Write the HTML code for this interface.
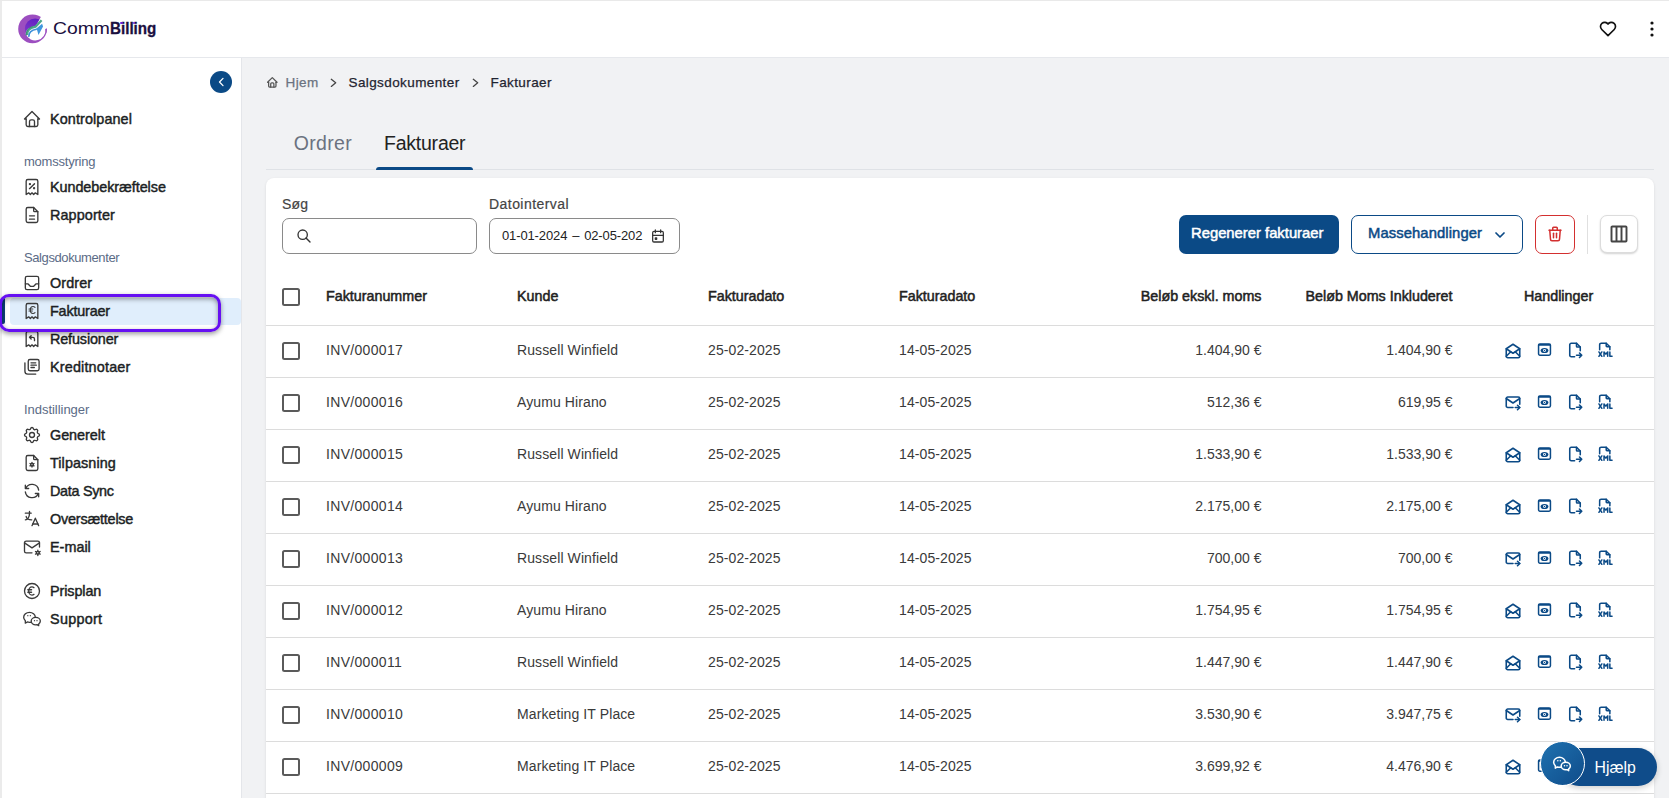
<!DOCTYPE html>
<html lang="da">
<head>
<meta charset="utf-8">
<title>CommBilling - Fakturaer</title>
<style>
*{box-sizing:border-box;margin:0;padding:0}
html,body{width:1669px;height:798px;overflow:hidden;background:#fff}
body{font-family:"Liberation Sans",sans-serif;color:#1f2328;position:relative}
svg{display:block}
.ic{fill:none;stroke:currentColor;stroke-width:1.75;stroke-linecap:round;stroke-linejoin:round}
#frameL{position:absolute;left:0;top:0;width:2px;height:798px;background:#ebebeb;z-index:50}
#frameT{position:absolute;left:0;top:0;width:1669px;height:1px;background:#e9e9e9;z-index:50}
/* header */
#hdr{position:absolute;left:2px;top:1px;width:1667px;height:57px;background:#fff;border-bottom:1px solid #e6e8ec}
#logo{position:absolute;left:10px;top:7.200px}
#brand{position:absolute;left:0;top:17px;font-size:16.600px;line-height:22px;color:#1a0f40;white-space:nowrap}
#brand span{position:absolute;top:0;display:block;transform-origin:0 50%}
#br1{left:50.900px;transform:scaleX(1.165)}
#br2{left:107.500px;font-weight:700;transform:scaleX(.915);-webkit-text-stroke:.3px #1a0f40}
.pd{position:absolute;top:20.700px;width:2.800px;height:2.800px;border-radius:50%;background:#6a1fd6}
#heart{position:absolute;left:1596px;top:18px;color:#111}
#dots{position:absolute;left:1640px;top:17px;color:#111}
/* sidebar */
#side{position:absolute;left:2px;top:58px;width:240px;height:740px;background:#fff;border-right:1px solid #e4e6ea}
#collapse{position:absolute;left:208px;top:13px;width:22px;height:22px;border-radius:50%;background:#0b4a86;color:#fff}
.nav{position:absolute;left:0;width:239px;height:28px;font-weight:400;-webkit-text-stroke:.45px #1c1f24;font-size:14.400px;line-height:28px;color:#1c1f24;white-space:nowrap}
.nav svg{position:absolute;left:20px;top:4px;color:#3a3a3a;stroke-width:1.600}
.nav span{position:absolute;left:48px;top:0}
.sec{position:absolute;left:22px;font-size:13px;line-height:16px;color:#5b6b86;white-space:nowrap}
#actbg{position:absolute;left:8px;top:239.500px;width:231px;height:27.500px;background:#e0eefc;border-radius:4px}
#actbar{position:absolute;left:0;top:239px;width:3px;height:27px;background:#0b4077;border-radius:0 2px 2px 0}
#hl{position:absolute;left:-1px;top:294px;width:221.500px;height:38px;border:3px solid #6610f2;border-radius:10px;box-shadow:0 2px 5px rgba(0,0,0,.4), inset 0 2px 5px rgba(0,0,0,.4);z-index:60}
/* main */
#main{position:absolute;left:242px;top:58px;width:1427px;height:740px;background:#f1f2f4}
#content{position:absolute;left:0;top:0;width:1669px;height:798px;overflow:hidden}
.bc{position:absolute;top:73px;font-size:13.500px;line-height:20px;color:#1f2430;white-space:nowrap;letter-spacing:.4px;-webkit-text-stroke:.25px currentColor}
.tab{position:absolute;top:128px;font-size:19.500px;line-height:31px;white-space:nowrap}
#tabline{position:absolute;left:266px;top:169px;width:1388px;height:1px;background:#dfe2e6}
#tabul{position:absolute;left:376px;top:167px;width:97px;height:3px;background:#0b4a86;border-radius:3px 3px 0 0}
#card{position:absolute;left:266px;top:178px;width:1388px;height:640px;background:#fff;border-radius:8px;box-shadow:0 1px 3px rgba(0,0,0,.1)}
.lbl{position:absolute;top:194px;font-size:14px;line-height:20px;color:#444;white-space:nowrap;letter-spacing:.12px;-webkit-text-stroke:.2px #444}
.inp{position:absolute;top:218px;height:36px;border:1px solid #8a8a8a;border-radius:7px;background:#fff}
#b1{position:absolute;left:1179px;top:215px;width:160px;height:39px;border-radius:7px;background:#0b4a86;color:#fff;font-weight:400;-webkit-text-stroke:.5px #fff;font-size:14.800px;letter-spacing:0;line-height:36px;text-align:left;padding-left:12px;white-space:nowrap}
#b2{position:absolute;left:1351px;top:215px;width:172px;height:39px;border-radius:7px;border:1px solid #0b4a86;color:#0b4a86;font-weight:400;-webkit-text-stroke:.5px #0b4a86;font-size:14.800px;letter-spacing:.09px;line-height:34px;white-space:nowrap;background:#fff}
#b2 span{position:absolute;left:16px;top:0}
#b3{position:absolute;left:1535px;top:215px;width:40px;height:39px;border-radius:7px;border:1px solid #d32f2f;color:#d32f2f;background:#fff}
#vsep{position:absolute;left:1587px;top:215px;width:1px;height:39px;background:#e0e0e0}
#b4{position:absolute;left:1600px;top:215px;width:38px;height:38px;border-radius:7px;border:1px solid #dcdcdc;color:#444;background:#fff;box-shadow:0 1px 2px rgba(0,0,0,.18)}
.row{position:absolute;left:266px;width:1388px;height:52px;border-bottom:1px solid #dcdcdc;font-size:14px;line-height:49px;color:#3a3a3a;white-space:nowrap;letter-spacing:.1px}
.row.hd{font-weight:400;-webkit-text-stroke:.5px #222;color:#222;line-height:56px;font-size:14.300px;letter-spacing:0}.hd span{transform:scaleX(1);transform-origin:0 50%}.hd .c5,.hd .c6{transform-origin:100% 50%}
.row span{position:absolute;top:0}
.cb{position:absolute;left:16px;top:16px;width:18px;height:18px;border:2px solid #5a5a5a;border-radius:2.500px}
.hd .cb{top:20px}
.c1{left:60px;letter-spacing:.32px}.hd .c1{letter-spacing:0}.c2{left:251px}.c3{left:442px}.c4{left:633px}
.c5{right:392.500px;letter-spacing:0}.c6{right:201.500px;letter-spacing:0}.c7{left:1258px}
.row svg{position:absolute;color:#0b4a86}
.a1{left:1238px;top:16px;width:18px;height:18px}
.a2{left:1271px;top:16px;width:15px;height:15px}
.a3{left:1300px;top:15px;width:18px;height:18px}
.a4{left:1329.500px;top:15px;width:17.500px;height:17.500px}
#helppill{position:absolute;left:1560px;top:747.700px;width:96.700px;height:38px;border-radius:19px;background:#0f4c8a;color:#fff;font-size:15.800px;line-height:39px;padding-left:34.500px;box-shadow:0 2px 6px rgba(0,0,0,.2)}
#helpc{position:absolute;left:1540.400px;top:740.600px;width:45px;height:45px;border-radius:50%;border:1.600px solid #fff;background:linear-gradient(135deg,#1f72b0,#0f4c8a);color:#fff}
</style>
</head>
<body>
<div id="frameL"></div><div id="frameT"></div>
<div id="hdr">
  <svg id="logo" width="48" height="42" viewBox="0 0 48 42">
    <defs><linearGradient id="lg" x1="0.6" y1="0" x2="0.3" y2="1"><stop offset="0" stop-color="#5f1fc4"/><stop offset="1" stop-color="#8a3fc8"/></linearGradient></defs>
    <circle cx="20.53" cy="20.89" r="14.32" fill="#9c4ec0"/>
    <circle cx="23.16" cy="20.79" r="10.32" fill="url(#lg)"/>
    <path d="M13.79 26.32 C13.42 22.11 17.37 18.53 23.68 18.16 L28.84 8.95 L38.95 3.16 L38.95 20.26 L35.05 20.63 L33.47 21.05 A10.32 10.32 0 0 1 13.79 26.32z" fill="#fff"/>
    <path d="M34.84 20.26 A14.32 14.32 0 0 1 29.47 32.21 A10.32 10.32 0 0 0 33.47 21.05z" fill="#9c4ec0"/>
    <path d="M14.89 27.11 C14.74 22.63 18.16 19.47 23.79 18.53 L29.58 12.21" fill="none" stroke="#4ea78a" stroke-width="2.32" stroke-linejoin="miter"/>
    <path d="M14.32 27.37 C14.00 23.16 16.32 19.74 21.05 18.53" fill="none" stroke="#2f7f6b" stroke-width="0.63"/>
    <path d="M16.84 28.84 C16.63 24.74 19.74 21.84 24.63 21.16" fill="none" stroke="#3c8fd8" stroke-width="1.58"/>
    <path d="M23.79 20.95 L30.11 15.79 L31.05 18.42 L26.47 27.11 L25.16 22.37z" fill="#3f97de"/>
  </svg>
  <div id="brand"><span id="br1">Comm</span><span id="br2">Billing</span></div>
  <i class="pd" style="left:117.900px"></i><i class="pd" style="left:130.700px"></i>
  <svg id="heart" class="ic" width="20" height="20" viewBox="0 0 24 24" style="stroke-width:2"><path d="M19.5 12.572l-7.5 7.428l-7.5 -7.428a5 5 0 1 1 7.5 -6.566a5 5 0 1 1 7.5 6.572"/></svg>
  <svg id="dots" width="20" height="22" viewBox="0 0 20 22"><circle cx="10" cy="5" r="1.6" fill="#111"/><circle cx="10" cy="11" r="1.6" fill="#111"/><circle cx="10" cy="17" r="1.6" fill="#111"/></svg>
</div>

<div id="side">
  <div id="collapse"><svg class="ic" width="22" height="22" viewBox="0 0 22 22" style="stroke-width:1.300"><path d="M13 7.400L9.500 11L13 14.600"/></svg></div>
  <div id="actbg"></div><div id="actbar"></div>

  <div class="nav" style="top:47px"><svg class="ic" width="20" height="20" viewBox="0 0 24 24"><path d="M5 12l-2 0l9 -9l9 9l-2 0"/><path d="M5 12v7a2 2 0 0 0 2 2h10a2 2 0 0 0 2 -2v-7"/><path d="M9 21v-6a2 2 0 0 1 2 -2h2a2 2 0 0 1 2 2v6"/></svg><span style="letter-spacing:0.1px">Kontrolpanel</span></div>

  <div class="sec" style="top:96px;letter-spacing:-0.22px">momsstyring</div>
  <div class="nav" style="top:115px"><svg class="ic" width="20" height="20" viewBox="0 0 24 24"><path d="M9 14l6 -6"/><circle cx="9.5" cy="8.5" r=".6" fill="currentColor"/><circle cx="14.5" cy="13.5" r=".6" fill="currentColor"/><path d="M5 21v-16a2 2 0 0 1 2 -2h10a2 2 0 0 1 2 2v16l-3 -2l-2 2l-2 -2l-2 2l-2 -2l-3 2"/></svg><span style="letter-spacing:-0.06px">Kundebekræftelse</span></div>
  <div class="nav" style="top:143px"><svg class="ic" width="20" height="20" viewBox="0 0 24 24"><path d="M14 3v4a1 1 0 0 0 1 1h4"/><path d="M17 21h-10a2 2 0 0 1 -2 -2v-14a2 2 0 0 1 2 -2h7l5 5v11a2 2 0 0 1 -2 2z"/><path d="M9 13l6 0"/><path d="M9 17l6 0"/></svg><span style="letter-spacing:0.1px">Rapporter</span></div>

  <div class="sec" style="top:192px;letter-spacing:-0.4px">Salgsdokumenter</div>
  <div class="nav" style="top:211px"><svg class="ic" width="20" height="20" viewBox="0 0 24 24"><path d="M4 6a2 2 0 0 1 2 -2h12a2 2 0 0 1 2 2v12a2 2 0 0 1 -2 2h-12a2 2 0 0 1 -2 -2z"/><path d="M4 13h3l3 3h4l3 -3h3"/></svg><span style="letter-spacing:0.09px">Ordrer</span></div>
  <div class="nav" style="top:239px"><svg class="ic" width="20" height="20" viewBox="0 0 24 24"><path d="M5 21v-16a2 2 0 0 1 2 -2h10a2 2 0 0 1 2 2v16l-3 -2l-2 2l-2 -2l-2 2l-2 -2l-3 2"/><g style="stroke-width:1.350"><path d="M15.600 7.600a3.500 3.500 0 0 0 -2.400 -1c-1.900 0 -3.200 1.900 -3.200 4.200s1.300 4.200 3.200 4.200a3.500 3.500 0 0 0 2.400 -1"/><path d="M8.400 9.600h4.600"/><path d="M8.400 12h4"/></g></svg><span style="letter-spacing:-0.19px">Fakturaer</span></div>
  <div class="nav" style="top:267px"><svg class="ic" width="20" height="20" viewBox="0 0 24 24"><path d="M5 21v-16a2 2 0 0 1 2 -2h10a2 2 0 0 1 2 2v16l-3 -2l-2 2l-2 -2l-2 2l-2 -2l-3 2"/><path d="M15 14v-2a2 2 0 0 0 -2 -2h-4l2 -2m0 4l-2 -2"/></svg><span style="letter-spacing:-0.14px">Refusioner</span></div>
  <div class="nav" style="top:295px"><svg class="ic" width="20" height="20" viewBox="0 0 24 24"><path d="M7.500 5a2 2 0 0 1 2 -2h9a2 2 0 0 1 2 2v9.500a2 2 0 0 1 -2 2h-9a2 2 0 0 1 -2 -2z"/><path d="M16.500 20.500h-9.500a3.500 3.500 0 0 1 -3.500 -3.500v-10"/><path d="M10.800 7h5.700"/><path d="M10.800 9.800h6.400"/><path d="M10.800 12.600h4"/></svg><span style="letter-spacing:0.17px">Kreditnotaer</span></div>

  <div class="sec" style="top:344px;letter-spacing:-0.04px">Indstillinger</div>
  <div class="nav" style="top:363px"><svg class="ic" width="20" height="20" viewBox="0 0 24 24"><path d="M10.325 4.317c.426 -1.756 2.924 -1.756 3.35 0a1.724 1.724 0 0 0 2.573 1.066c1.543 -.94 3.31 .826 2.37 2.37a1.724 1.724 0 0 0 1.065 2.572c1.756 .426 1.756 2.924 0 3.35a1.724 1.724 0 0 0 -1.066 2.573c.94 1.543 -.826 3.31 -2.37 2.37a1.724 1.724 0 0 0 -2.572 1.065c-.426 1.756 -2.924 1.756 -3.35 0a1.724 1.724 0 0 0 -2.573 -1.066c-1.543 .94 -3.31 -.826 -2.37 -2.37a1.724 1.724 0 0 0 -1.065 -2.572c-1.756 -.426 -1.756 -2.924 0 -3.35a1.724 1.724 0 0 0 1.066 -2.573c-.94 -1.543 .826 -3.31 2.37 -2.37c1 .608 2.296 .07 2.572 -1.065z"/><path d="M9 12a3 3 0 1 0 6 0a3 3 0 0 0 -6 0"/></svg><span style="letter-spacing:-0.04px">Generelt</span></div>
  <div class="nav" style="top:391px"><svg class="ic" width="20" height="20" viewBox="0 0 24 24"><path d="M14 3v4a1 1 0 0 0 1 1h4"/><path d="M17 21h-10a2 2 0 0 1 -2 -2v-14a2 2 0 0 1 2 -2h7l5 5v11a2 2 0 0 1 -2 2z"/><circle cx="12" cy="14" r="1.6"/><path d="M12 11.200v1.200M12 15.600v1.200M14.400 12.600l-1 .6M10.600 14.800l-1 .6M14.400 15.400l-1 -.6M10.600 13.200l-1 -.6"/></svg><span style="letter-spacing:0.08px">Tilpasning</span></div>
  <div class="nav" style="top:419px"><svg class="ic" width="20" height="20" viewBox="0 0 24 24"><path d="M20 11a8.100 8.100 0 0 0 -15.500 -2m-.5 -4v4h4"/><path d="M4 13a8.100 8.100 0 0 0 15.500 2m.5 4v-4h-4"/></svg><span style="letter-spacing:-0.3px">Data Sync</span></div>
  <div class="nav" style="top:447px"><svg class="ic" width="20" height="20" viewBox="0 0 24 24"><path d="M4 5h7"/><path d="M9 3v2c0 4.418 -2.239 8 -5 8"/><path d="M5 9c0 2.144 2.952 3.908 6.700 4"/><path d="M12 20l4 -9l4 9"/><path d="M19.100 18h-6.200"/></svg><span style="letter-spacing:-0.2px">Oversættelse</span></div>
  <div class="nav" style="top:475px"><svg class="ic" width="20" height="20" viewBox="0 0 24 24"><path d="M12 19h-7a2 2 0 0 1 -2 -2v-10a2 2 0 0 1 2 -2h14a2 2 0 0 1 2 2v5"/><path d="M3 7l9 6l9 -6"/><circle cx="19" cy="19" r="1.700"/><path d="M19 15.800v1.500M19 20.700v1.500M21.800 17.400l-1.300 .75M17.500 19.850l-1.300 .75M16.200 17.400l1.300 .75M20.500 19.850l1.300 .75"/></svg><span style="letter-spacing:0px">E-mail</span></div>

  <div class="nav" style="top:519px"><svg class="ic" width="20" height="20" viewBox="0 0 24 24"><circle cx="12" cy="12" r="9"/><path d="M14.401 8c-.669 -.628 -1.500 -1 -2.401 -1c-2.210 0 -4 2.239 -4 5s1.790 5 4 5c.900 0 1.731 -.372 2.400 -1"/><path d="M7 10.500h4.500"/><path d="M7 13.500h4.500"/></svg><span style="letter-spacing:-0.1px">Prisplan</span></div>
  <div class="nav" style="top:547px"><svg class="ic" width="20" height="20" viewBox="0 0 24 24"><path d="M16.500 10c3.038 0 5.500 2.015 5.500 4.500c0 1.397 -.778 2.645 -2 3.470l0 2.030l-1.964 -1.178a6.649 6.649 0 0 1 -1.536 .178c-3.038 0 -5.500 -2.015 -5.500 -4.500s2.462 -4.500 5.500 -4.500z"/><path d="M11.197 15.698c-.69 .196 -1.430 .302 -2.197 .302a8.008 8.008 0 0 1 -2.612 -.432l-2.388 1.432v-2.801c-1.237 -1.082 -2 -2.564 -2 -4.199c0 -3.314 3.134 -6 7 -6c3.782 0 6.863 2.570 7 5.785l0 .233"/><path d="M10 8h.01M7 8h.01M15 14h.01M18 14h.01"/></svg><span style="letter-spacing:0.28px">Support</span></div>

</div>
<div id="hl"></div>

<div id="main"></div>
<svg width="0" height="0" style="position:absolute">
  <defs>
    <symbol id="i-open" viewBox="0 0 24 24"><g class="ic" style="stroke-width:2.1"><path d="M3 9l9 6l9 -6l-9 -6l-9 6"/><path d="M21 9v10a2 2 0 0 1 -2 2h-14a2 2 0 0 1 -2 -2v-10"/><path d="M3 19l6 -6"/><path d="M15 13l6 6"/></g></symbol>
    <symbol id="i-fwd" viewBox="0 0 24 24"><g class="ic" style="stroke-width:2.1"><path d="M12 18h-7a2 2 0 0 1 -2 -2v-10a2 2 0 0 1 2 -2h14a2 2 0 0 1 2 2v7.500"/><path d="M3 6l9 6l9 -6"/><path d="M15 18h6"/><path d="M18 15l3 3l-3 3"/></g></symbol>
    <symbol id="i-prev" viewBox="0 0 24 24"><rect x="2.500" y="3" width="19" height="18" rx="2.200" fill="none" stroke="currentColor" stroke-width="2.400"/><rect x="2.500" y="3" width="19" height="3" fill="currentColor"/><ellipse cx="12" cy="13.600" rx="6.200" ry="4.100" fill="currentColor"/><circle cx="12" cy="13.600" r="2.300" fill="#fff"/><circle cx="12" cy="13.600" r="1.100" fill="currentColor"/></symbol>
    <symbol id="i-exp" viewBox="0 0 24 24"><g class="ic" style="stroke-width:2.1"><path d="M14 3v4a1 1 0 0 0 1 1h4"/><path d="M11.500 21h-4.500a2 2 0 0 1 -2 -2v-14a2 2 0 0 1 2 -2h7l5 5v5m-5 6h7m-3 -3l3 3l-3 3"/></g></symbol>
    <symbol id="i-xml" viewBox="0 0 24 24"><g class="ic" style="stroke-width:2.1"><path d="M14 3v4a1 1 0 0 0 1 1h4"/><path d="M5 12v-7a2 2 0 0 1 2 -2h7l5 5v4"/><path d="M4 15l4 6"/><path d="M4 21l4 -6"/><path d="M19 15v6h3"/><path d="M11 21v-6l2.500 3l2.500 -3v6"/></g></symbol>
  </defs>
</svg>
<div id="content">
  <!-- breadcrumb -->
  <svg class="ic" style="position:absolute;left:266.200px;top:76.200px;color:#555;stroke-width:2.400" width="12.600" height="12.600" viewBox="0 0 24 24"><path d="M5 12l-2 0l9 -9l9 9l-2 0"/><path d="M5 12v7a2 2 0 0 0 2 2h10a2 2 0 0 0 2 -2v-7"/><path d="M9 21v-6a2 2 0 0 1 2 -2h2a2 2 0 0 1 2 2v6"/></svg>
  <div class="bc" style="left:285.500px;color:#6b7280">Hjem</div>
  <svg class="ic" style="position:absolute;left:328px;top:76px;color:#444;stroke-width:1.300" width="12" height="14" viewBox="0 0 12 14"><path d="M3.300 3.300l4.400 3.500l-4.400 3.600"/></svg>
  <div class="bc" style="left:348.500px">Salgsdokumenter</div>
  <svg class="ic" style="position:absolute;left:470.200px;top:76px;color:#444;stroke-width:1.300" width="12" height="14" viewBox="0 0 12 14"><path d="M3.300 3.300l4.400 3.500l-4.400 3.600"/></svg>
  <div class="bc" style="left:490.500px">Fakturaer</div>
  <!-- tabs -->
  <div class="tab" style="left:293.800px;color:#6b7280;letter-spacing:.3px">Ordrer</div>
  <div class="tab" style="left:384px;color:#222;letter-spacing:-.23px">Fakturaer</div>
  <div id="tabline"></div>
  <div id="tabul"></div>
  <!-- card -->
  <div id="card"></div>
  <div class="lbl" style="left:282px">Søg</div>
  <div class="inp" style="left:282px;width:195px"><svg class="ic" style="position:absolute;left:13px;top:8.700px;color:#333;stroke-width:2" width="16" height="16" viewBox="0 0 24 24"><circle cx="10" cy="10" r="7"/><path d="M21 21l-6 -6"/></svg></div>
  <div class="lbl" style="left:489px;letter-spacing:.45px">Datointerval</div>
  <div class="inp" style="left:489px;width:191px"><span style="position:absolute;left:12px;top:0;line-height:34px;font-size:13px;letter-spacing:-.125px;word-spacing:1.400px;color:#222;white-space:nowrap" id="dt">01-01-2024 – 02-05-202</span><svg class="ic" style="position:absolute;left:159.500px;top:8.700px;color:#333;stroke-width:1.900" width="16" height="16" viewBox="0 0 24 24"><path d="M4 7a2 2 0 0 1 2 -2h12a2 2 0 0 1 2 2v12a2 2 0 0 1 -2 2h-12a2 2 0 0 1 -2 -2z"/><path d="M16 3l0 4"/><path d="M8 3l0 4"/><path d="M4 11l16 0"/><path d="M8 15h2v2h-2z"/></svg></div>
  <div id="b1">Regenerer fakturaer</div>
  <div id="b2"><span>Massehandlinger</span><svg class="ic" style="position:absolute;left:140px;top:10.500px;stroke-width:2.600" width="16" height="16" viewBox="0 0 24 24"><path d="M6 9l6 6l6 -6"/></svg></div>
  <div id="b3"><svg class="ic" style="position:absolute;left:10px;top:9px;stroke-width:2" width="18" height="18" viewBox="0 0 24 24"><path d="M4 7l16 0"/><path d="M10 11l0 6"/><path d="M14 11l0 6"/><path d="M5 7l1 12a2 2 0 0 0 2 2h8a2 2 0 0 0 2 -2l1 -12"/><path d="M9 7v-3a1 1 0 0 1 1 -1h4a1 1 0 0 1 1 1v3"/></svg></div>
  <div id="vsep"></div>
  <div id="b4"><svg class="ic" style="position:absolute;left:8px;top:8px;stroke-width:2.300" width="20" height="20" viewBox="0 0 24 24"><path d="M3 4a1 1 0 0 1 1 -1h16a1 1 0 0 1 1 1v16a1 1 0 0 1 -1 1h-16a1 1 0 0 1 -1 -1zm6 -1v18m6 -18v18"/></svg></div>
  <!-- table head -->
  <div class="row hd" style="top:268px;height:58px"><i class="cb"></i><span class="c1">Fakturanummer</span><span class="c2">Kunde</span><span class="c3">Fakturadato</span><span class="c4">Fakturadato</span><span class="c5">Beløb ekskl. moms</span><span class="c6">Beløb Moms Inkluderet</span><span class="c7">Handlinger</span></div>
<div class="row" style="top:326px"><i class="cb"></i><span class="c1">INV/000017</span><span class="c2">Russell Winfield</span><span class="c3">25-02-2025</span><span class="c4">14-05-2025</span><span class="c5">1.404,90 €</span><span class="c6">1.404,90 €</span><svg class="a1"><use href="#i-open"/></svg><svg class="a2"><use href="#i-prev"/></svg><svg class="a3"><use href="#i-exp"/></svg><svg class="a4"><use href="#i-xml"/></svg></div>
<div class="row" style="top:378px"><i class="cb"></i><span class="c1">INV/000016</span><span class="c2">Ayumu Hirano</span><span class="c3">25-02-2025</span><span class="c4">14-05-2025</span><span class="c5">512,36 €</span><span class="c6">619,95 €</span><svg class="a1"><use href="#i-fwd"/></svg><svg class="a2"><use href="#i-prev"/></svg><svg class="a3"><use href="#i-exp"/></svg><svg class="a4"><use href="#i-xml"/></svg></div>
<div class="row" style="top:430px"><i class="cb"></i><span class="c1">INV/000015</span><span class="c2">Russell Winfield</span><span class="c3">25-02-2025</span><span class="c4">14-05-2025</span><span class="c5">1.533,90 €</span><span class="c6">1.533,90 €</span><svg class="a1"><use href="#i-open"/></svg><svg class="a2"><use href="#i-prev"/></svg><svg class="a3"><use href="#i-exp"/></svg><svg class="a4"><use href="#i-xml"/></svg></div>
<div class="row" style="top:482px"><i class="cb"></i><span class="c1">INV/000014</span><span class="c2">Ayumu Hirano</span><span class="c3">25-02-2025</span><span class="c4">14-05-2025</span><span class="c5">2.175,00 €</span><span class="c6">2.175,00 €</span><svg class="a1"><use href="#i-open"/></svg><svg class="a2"><use href="#i-prev"/></svg><svg class="a3"><use href="#i-exp"/></svg><svg class="a4"><use href="#i-xml"/></svg></div>
<div class="row" style="top:534px"><i class="cb"></i><span class="c1">INV/000013</span><span class="c2">Russell Winfield</span><span class="c3">25-02-2025</span><span class="c4">14-05-2025</span><span class="c5">700,00 €</span><span class="c6">700,00 €</span><svg class="a1"><use href="#i-fwd"/></svg><svg class="a2"><use href="#i-prev"/></svg><svg class="a3"><use href="#i-exp"/></svg><svg class="a4"><use href="#i-xml"/></svg></div>
<div class="row" style="top:586px"><i class="cb"></i><span class="c1">INV/000012</span><span class="c2">Ayumu Hirano</span><span class="c3">25-02-2025</span><span class="c4">14-05-2025</span><span class="c5">1.754,95 €</span><span class="c6">1.754,95 €</span><svg class="a1"><use href="#i-open"/></svg><svg class="a2"><use href="#i-prev"/></svg><svg class="a3"><use href="#i-exp"/></svg><svg class="a4"><use href="#i-xml"/></svg></div>
<div class="row" style="top:638px"><i class="cb"></i><span class="c1">INV/000011</span><span class="c2">Russell Winfield</span><span class="c3">25-02-2025</span><span class="c4">14-05-2025</span><span class="c5">1.447,90 €</span><span class="c6">1.447,90 €</span><svg class="a1"><use href="#i-open"/></svg><svg class="a2"><use href="#i-prev"/></svg><svg class="a3"><use href="#i-exp"/></svg><svg class="a4"><use href="#i-xml"/></svg></div>
<div class="row" style="top:690px"><i class="cb"></i><span class="c1">INV/000010</span><span class="c2">Marketing IT Place</span><span class="c3">25-02-2025</span><span class="c4">14-05-2025</span><span class="c5">3.530,90 €</span><span class="c6">3.947,75 €</span><svg class="a1"><use href="#i-fwd"/></svg><svg class="a2"><use href="#i-prev"/></svg><svg class="a3"><use href="#i-exp"/></svg><svg class="a4"><use href="#i-xml"/></svg></div>
<div class="row" style="top:742px"><i class="cb"></i><span class="c1">INV/000009</span><span class="c2">Marketing IT Place</span><span class="c3">25-02-2025</span><span class="c4">14-05-2025</span><span class="c5">3.699,92 €</span><span class="c6">4.476,90 €</span><svg class="a1"><use href="#i-open"/></svg><svg class="a2"><use href="#i-prev"/></svg><svg class="a3"><use href="#i-exp"/></svg><svg class="a4"><use href="#i-xml"/></svg></div>
  <!-- help -->
  <div id="helppill">Hjælp</div>
  <div id="helpc"><svg class="ic" style="position:absolute;left:11px;top:12.200px;stroke-width:1.800" width="20" height="20" viewBox="0 0 24 24"><path d="M16.500 10c3.038 0 5.500 2.015 5.500 4.500c0 1.397 -.778 2.645 -2 3.470l0 2.030l-1.964 -1.178a6.649 6.649 0 0 1 -1.536 .178c-3.038 0 -5.500 -2.015 -5.500 -4.500s2.462 -4.500 5.500 -4.500z"/><path d="M11.197 15.698c-.69 .196 -1.430 .302 -2.197 .302a8.008 8.008 0 0 1 -2.612 -.432l-2.388 1.432v-2.801c-1.237 -1.082 -2 -2.564 -2 -4.199c0 -3.314 3.134 -6 7 -6c3.782 0 6.863 2.570 7 5.785l0 .233"/><path d="M10 8h.01M7 8h.01M15 14h.01M18 14h.01"/></svg></div>
</div>

</body>
</html>
